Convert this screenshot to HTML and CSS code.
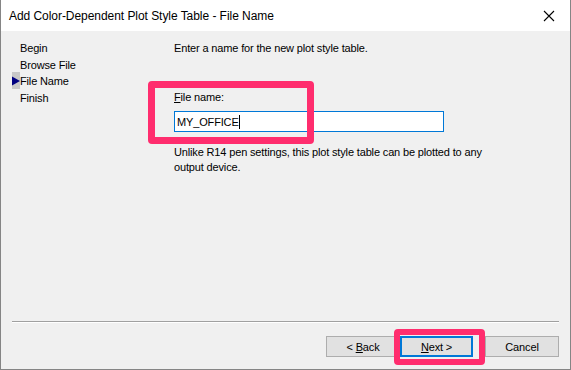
FILE: index.html
```html
<!DOCTYPE html>
<html>
<head>
<meta charset="utf-8">
<link rel="stylesheet" href="styles.css">
</head>
<body>
<div class="window">
  <div class="titlebar">
    <span class="title">Add Color-Dependent Plot Style Table - File Name</span>
    <svg class="close" width="12" height="12" viewBox="0 0 12 12"><path d="M1 1 L11 11 M11 1 L1 11" stroke="#000" stroke-width="1.1" fill="none"/></svg>
  </div>
  <div class="client">
    <div class="main">
      <ul class="nav">
        <li>Begin</li>
        <li>Browse File</li>
        <li class="current"><span class="marker"><svg width="9" height="10" viewBox="0 0 9 10"><path d="M0 0 L9 5 L0 10 Z" fill="#000080"/></svg></span>File Name</li>
        <li>Finish</li>
      </ul>
      <div class="page">
        <p class="intro">Enter a name for the new plot style table.</p>
        <label class="field-label"><u>F</u>ile name:</label>
        <div class="input"><span>MY_OFFICE</span><span class="caret"></span></div>
        <p class="desc">Unlike R14 pen settings, this plot style table can be plotted to any output device.</p>
      </div>
    </div>
    <div class="separator"></div>
    <div class="buttons">
      <button class="btn">&lt; <u>B</u>ack</button>
      <button class="btn default"><u>N</u>ext &gt;</button>
      <button class="btn cancel">Cancel</button>
    </div>
  </div>
  <div class="highlight hl-field"></div>
  <div class="highlight hl-next"></div>
</div>
</body>
</html>
```
FILE: styles.css
```css
* { box-sizing: border-box; }
html, body { margin: 0; padding: 0; }
body {
  width: 571px;
  height: 370px;
  overflow: hidden;
  font-family: "Liberation Sans", Arial, sans-serif;
  font-size: 11px;
  color: #000;
  background: #f0f0f0;
}
.window {
  position: relative;
  width: 571px;
  height: 370px;
  border: 1px solid #858585;
  border-top: none;
  display: flex;
  flex-direction: column;
  background: #f0f0f0;
  letter-spacing: -0.15px;
}
.titlebar {
  height: 31px;
  background: #fff;
  display: flex;
  align-items: center;
  justify-content: space-between;
  padding: 0 15px 0 8px;
  flex-shrink: 0;
}
.title {
  font-size: 12px;
  letter-spacing: -0.05px;
  font-family: "Liberation Sans", Arial, sans-serif;
}
.close { display: block; }
.client {
  flex: 1;
  display: flex;
  flex-direction: column;
}
.main {
  flex: 1;
  display: flex;
  padding-top: 10px;
}
.nav {
  list-style: none;
  margin: 0;
  padding: 0 0 0 19px;
  width: 173px;
  flex-shrink: 0;
}
.nav li {
  height: 16.6px;
  line-height: 15px;
  position: relative;
  white-space: nowrap;
}
.nav li.current .marker {
  position: absolute;
  left: -8px;
  top: -2px;
  width: 8px;
  height: 17px;
  background: #c8c8c8;
  display: flex;
  align-items: center;
}
.marker svg { display: block; }
.page {
  flex: 1;
}
.intro {
  margin: 0;
  line-height: 15px;
}
.field-label {
  display: block;
  margin-top: 34px;
  line-height: 14px;
}
.input {
  margin-top: 7px;
  width: 270px;
  height: 21px;
  background: #fff;
  border: 1px solid #0078d7;
  padding-left: 2px;
  display: flex;
  align-items: center;
  font-size: 11px;
}
.caret {
  display: inline-block;
  width: 1px;
  height: 14px;
  background: #000;
}
.desc {
  margin: 13px 0 0 0;
  width: 320px;
  line-height: 15px;
}
.separator {
  margin: 0 11px 0 11px;
  height: 2px;
  border-top: 1px solid #a0a0a0;
  border-bottom: 1px solid #ffffff;
}
.buttons {
  display: flex;
  justify-content: flex-end;
  padding: 13px 11px 12px 0;
}
.btn {
  width: 74px;
  height: 21px;
  background: #e1e1e1;
  border: 1px solid #adadad;
  font-family: "Liberation Sans", Arial, sans-serif;
  font-size: 11px;
  letter-spacing: -0.15px;
  color: #000;
  padding: 0;
  margin: 0;
}
.btn.default {
  border: 2px solid #0078d7;
  width: 73px;
}
.btn.cancel { margin-left: 12px; }
.highlight {
  position: absolute;
  border: 7px solid #ff2d6e;
  border-radius: 4px;
}
.hl-field {
  left: 147px;
  top: 81px;
  width: 166px;
  height: 63px;
}
.hl-next {
  left: 393px;
  top: 329px;
  width: 91px;
  height: 36px;
  border-width: 6px;
}
```
